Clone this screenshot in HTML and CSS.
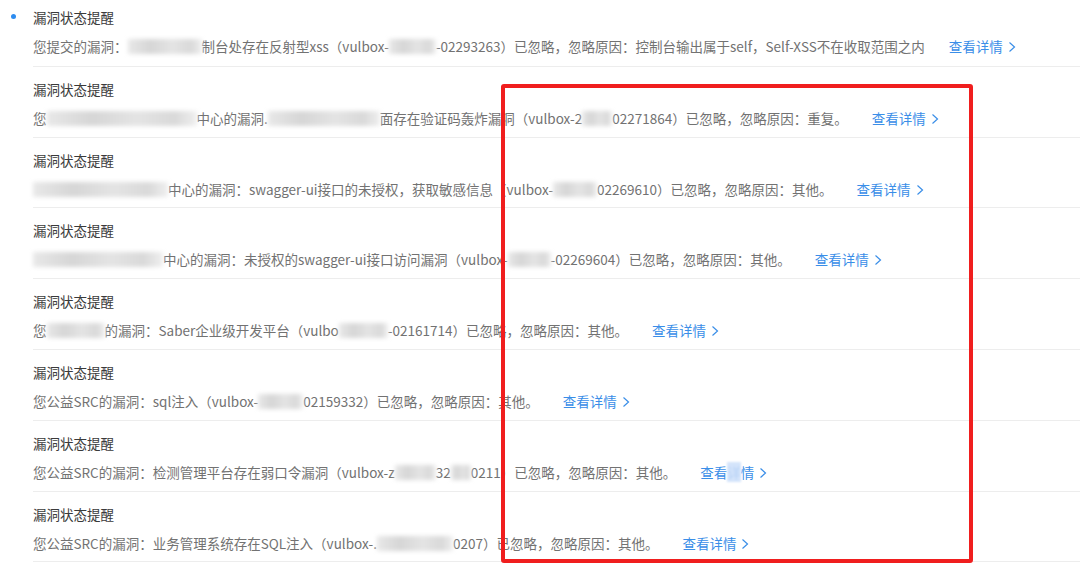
FILE: index.html
```html
<!DOCTYPE html>
<html lang="zh-CN">
<head>
   <meta charset="UTF-8">
   <meta name="viewport" content="width=device-width, initial-scale=1.0">
   <title>消息通知</title>
   <link rel="stylesheet" href="styles.css">
</head>
<body>
   <div class="notice-list">
       <div class="notice unread">
           <span class="dot"></span>
           <div class="notice-body">
               <div class="notice-title">漏洞状态提醒</div>
               <div class="notice-text">您提交的漏洞：<span class="mask m74"></span>制台处存在反射型xss（vulbox-<span class="mask m47"></span>-02293263）已忽略，忽略原因：控制台输出属于self，Self-XSS不在收取范围之内<a class="detail" href="#">查看详情<svg viewBox="0 0 8 12"><path d="M1.5 1.5 L6.5 6 L1.5 10.5"/></svg></a></div>
           </div>
       </div>
       <div class="notice">
           <span class="dot-empty"></span>
           <div class="notice-body">
               <div class="notice-title">漏洞状态提醒</div>
               <div class="notice-text">您<span class="mask m150"></span>中心的漏洞.<span class="mask m112"></span>面存在验证码轰炸漏洞（vulbox-2<span class="mask m30"></span>02271864）已忽略，忽略原因：重复。<a class="detail" href="#">查看详情<svg viewBox="0 0 8 12"><path d="M1.5 1.5 L6.5 6 L1.5 10.5"/></svg></a></div>
           </div>
       </div>
       <div class="notice">
           <span class="dot-empty"></span>
           <div class="notice-body">
               <div class="notice-title">漏洞状态提醒</div>
               <div class="notice-text"><span class="mask m135"></span>中心的漏洞：swagger-ui接口的未授权，获取敏感信息（vulbox-<span class="mask m44"></span>02269610）已忽略，忽略原因：其他。<a class="detail" href="#">查看详情<svg viewBox="0 0 8 12"><path d="M1.5 1.5 L6.5 6 L1.5 10.5"/></svg></a></div>
           </div>
       </div>
       <div class="notice">
           <span class="dot-empty"></span>
           <div class="notice-body">
               <div class="notice-title">漏洞状态提醒</div>
               <div class="notice-text"><span class="mask m130"></span>中心的漏洞：未授权的swagger-ui接口访问漏洞（vulbox-<span class="mask m43"></span>-02269604）已忽略，忽略原因：其他。<a class="detail" href="#">查看详情<svg viewBox="0 0 8 12"><path d="M1.5 1.5 L6.5 6 L1.5 10.5"/></svg></a></div>
           </div>
       </div>
       <div class="notice">
           <span class="dot-empty"></span>
           <div class="notice-body">
               <div class="notice-title">漏洞状态提醒</div>
               <div class="notice-text">您<span class="mask m58"></span>的漏洞：Saber企业级开发平台（vulbo<span class="mask m49"></span>-02161714）已忽略，忽略原因：其他。<a class="detail" href="#">查看详情<svg viewBox="0 0 8 12"><path d="M1.5 1.5 L6.5 6 L1.5 10.5"/></svg></a></div>
           </div>
       </div>
       <div class="notice">
           <span class="dot-empty"></span>
           <div class="notice-body">
               <div class="notice-title">漏洞状态提醒</div>
               <div class="notice-text">您公益SRC的漏洞：sql注入（vulbox-<span class="mask m45"></span>02159332）已忽略，忽略原因：其他。<a class="detail" href="#">查看详情<svg viewBox="0 0 8 12"><path d="M1.5 1.5 L6.5 6 L1.5 10.5"/></svg></a></div>
           </div>
       </div>
       <div class="notice">
           <span class="dot-empty"></span>
           <div class="notice-body">
               <div class="notice-title">漏洞状态提醒</div>
               <div class="notice-text">您公益SRC的漏洞：检测管理平台存在弱口令漏洞（vulbox-z<span class="mask m41"></span>32<span class="mask m20"></span>0211）已忽略，忽略原因：其他。<a class="detail" href="#">查看<span class="smudge">详</span>情<svg viewBox="0 0 8 12"><path d="M1.5 1.5 L6.5 6 L1.5 10.5"/></svg></a></div>
           </div>
       </div>
       <div class="notice">
           <span class="dot-empty"></span>
           <div class="notice-body">
               <div class="notice-title">漏洞状态提醒</div>
               <div class="notice-text">您公益SRC的漏洞：业务管理系统存在SQL注入（vulbox-.<span class="mask m76"></span>0207）已忽略，忽略原因：其他。<a class="detail" href="#">查看详情<svg viewBox="0 0 8 12"><path d="M1.5 1.5 L6.5 6 L1.5 10.5"/></svg></a></div>
           </div>
       </div>
   </div>

   <div class="highlight-box"></div>
</body>
</html>
```

FILE: styles.css
```css
body {
    font-family: "Noto Sans CJK SC", "Noto Sans", sans-serif;
    margin: 0;
    background: #ffffff;
    position: relative;
    height: 574px;
    overflow: hidden;
}

/* Список уведомлений */
.notice-list {
    display: flex;
    flex-direction: column;
}

.notice {
    display: grid;
    grid-template-columns: 33px 1fr;
}

.dot {
    width: 5px;
    height: 5px;
    border-radius: 50%;
    background: #2d8cf0;
    margin: 14px 0 0 11px;
}

.notice-body {
    padding: 13px 0 0;
    border-bottom: 1px solid #ededed;
    height: 56.8px;
    box-sizing: border-box;
    height: 70.8px;
}

.notice:first-child .notice-body {
    padding-top: 8px;
    height: 66.8px;
}

.notice-title {
    font-size: 13.5px;
    line-height: 18px;
    color: #3a3a3a;
}

.notice-text {
    margin-top: 11px;
    font-size: 13.5px;
    line-height: 18px;
    color: #727272;
    white-space: nowrap;
}

.detail {
    margin-left: 24px;
    color: #3a8ee8;
    text-decoration: none;
}

.detail svg {
    width: 8px;
    height: 12px;
    margin-left: 5px;
    vertical-align: -1px;
    fill: none;
    stroke: #3a8ee8;
    stroke-width: 1.2;
}

/* Замазанные места */
.mask {
    display: inline-block;
    height: 15px;
    vertical-align: -2px;
    background: linear-gradient(90deg, #e8e8e8, #d6d6d6 30%, #e4e4e4 60%, #d9d9d9 85%, #efefef);
    filter: blur(2px);
}

.m20 { width: 20px; }
.m30 { width: 30px; }
.m41 { width: 41px; }
.m43 { width: 43px; }
.m44 { width: 44px; }
.m45 { width: 45px; }
.m47 { width: 47px; }
.m49 { width: 49px; }
.m58 { width: 58px; }
.m74 { width: 74px; }
.m76 { width: 76px; }
.m112 { width: 112px; }
.m130 { width: 130px; }
.m135 { width: 135px; }
.m150 { width: 150px; }

.smudge {
    color: #b8d3f6;
    background: #d4e4fb;
    filter: blur(1px);
}

/* Красная рамка поверх списка */
.highlight-box {
    position: absolute;
    left: 501px;
    top: 84px;
    width: 464px;
    height: 471px;
    border: 4px solid #f01e1e;
    border-radius: 3px;
}
```
